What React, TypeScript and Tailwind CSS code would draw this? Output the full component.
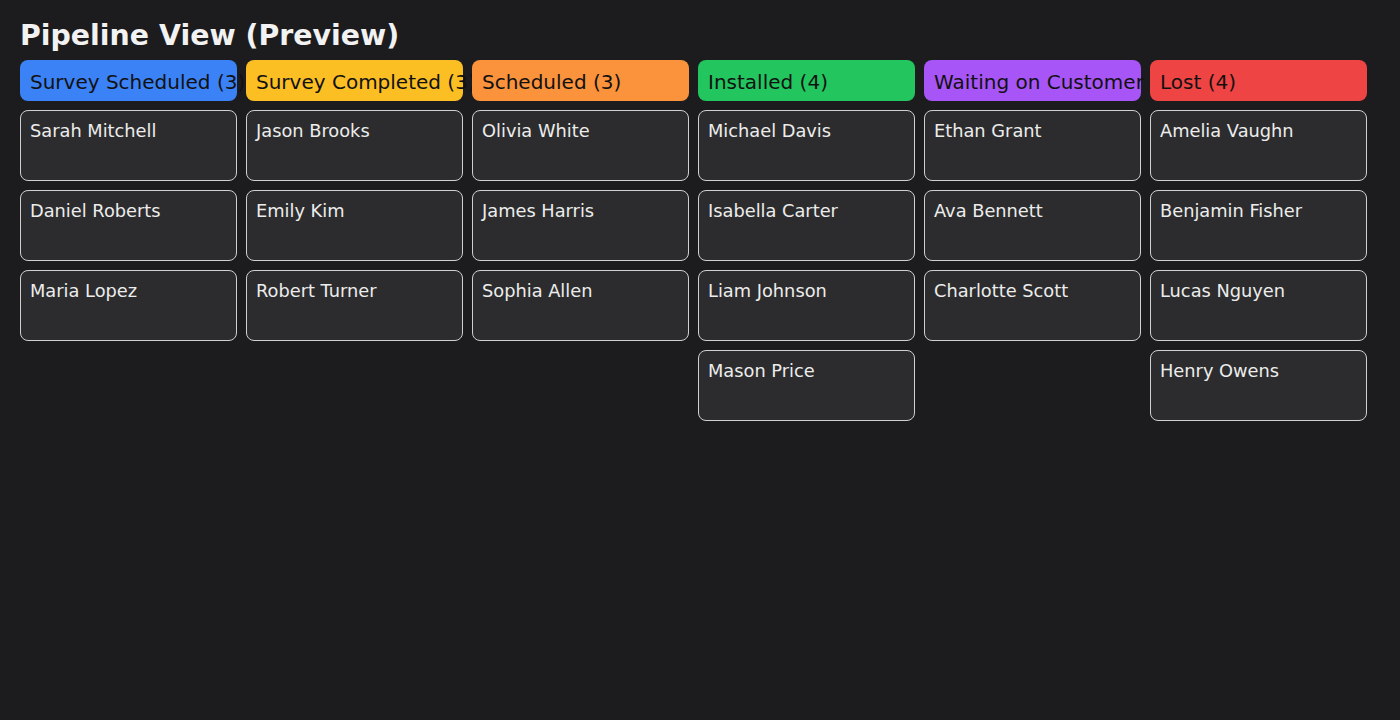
import React from "react";

type Col = { title: string; color: string; items: string[] };

const cols: Col[] = [
  { title: "Survey Scheduled", color: "bg-[#3b82f6]", items: ["Sarah Mitchell", "Daniel Roberts", "Maria Lopez"] },
  { title: "Survey Completed", color: "bg-[#fbbf24]", items: ["Jason Brooks", "Emily Kim", "Robert Turner"] },
  { title: "Scheduled", color: "bg-[#fb923c]", items: ["Olivia White", "James Harris", "Sophia Allen"] },
  { title: "Installed", color: "bg-[#22c55e]", items: ["Michael Davis", "Isabella Carter", "Liam Johnson", "Mason Price"] },
  { title: "Waiting on Customer", color: "bg-[#a855f7]", items: ["Ethan Grant", "Ava Bennett", "Charlotte Scott"] },
  { title: "Lost", color: "bg-[#ef4444]", items: ["Amelia Vaughn", "Benjamin Fisher", "Lucas Nguyen", "Henry Owens"] },
];

export default function App() {
  return (
    <div
      className="min-h-[720px] w-full bg-[#1c1c1e] p-[20px] text-[#f2f2f2]"
      style={{ fontFamily: '"DejaVu Sans", sans-serif' }}
    >
      <h1 className="m-0 mb-[8px] text-[28.4px] font-bold leading-[32px] text-[#f2f2f2]">Pipeline View (Preview)</h1>
      <div className="flex gap-[9px]">
        {cols.map((c) => (
          <div key={c.title} className="flex w-[217px] shrink-0 flex-col gap-[9px]">
            <div
              className={`flex h-[41px] items-center whitespace-nowrap rounded-[8px] px-[10px] pt-[2px] text-[20px] text-[#111111] ${c.color}`}
            >
              {c.title} ({c.items.length})
            </div>
            {c.items.map((n) => (
              <div
                key={n}
                className="h-[71px] rounded-[8px] border border-[#d0d0d0] bg-[#2c2c2e] px-[9px] pt-[10px] text-[17.8px] leading-[1.164] text-[#ececec]"
              >
                {n}
              </div>
            ))}
          </div>
        ))}
      </div>
    </div>
  );
}
